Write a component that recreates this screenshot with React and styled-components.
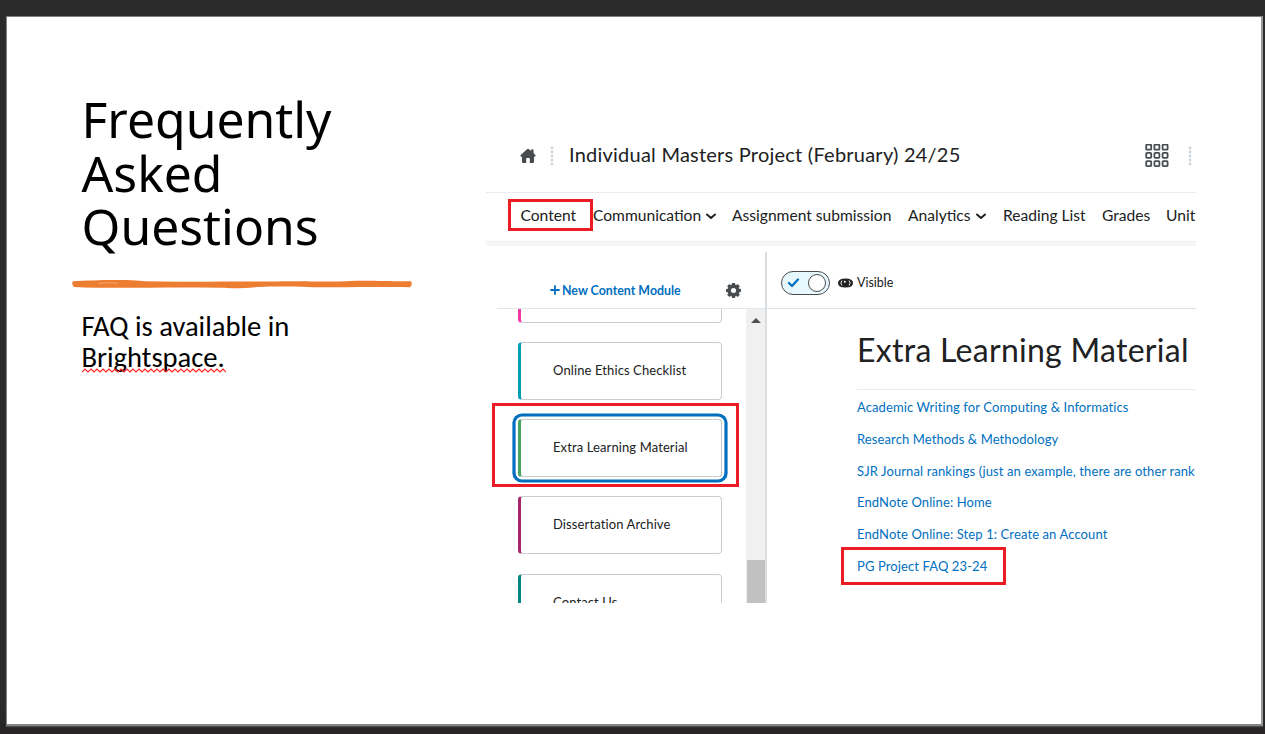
import React from "react";
import styled, { createGlobalStyle } from "styled-components";

const GlobalStyle = createGlobalStyle`
  * { box-sizing: border-box; }
  body { margin: 0; background: #2b2b2b; overflow: hidden; }
  h1, h2, p { margin: 0; font-weight: 400; }
`;

const Stage = styled.main`
  width: 1265px;
  height: 734px;
  padding: 16px 2px 8px 6px;
  background: linear-gradient(#2b2b2b 700px, #262424);
  font-family: Lato, sans-serif;
  overflow: hidden;
`;

const Slide = styled.section`
  display: flex;
  height: 710px;
  background: #fff;
  border: 1px solid #7f7f7f;
  border-right: 2px solid #999;
  border-bottom: 2px solid #858585;
  box-shadow: 0 1px 1px 0 #4c4c4c;
`;

const Intro = styled.div`
  width: 479px;
  padding: 76px 0 0 64.5px;
  flex: none;
`;

const Title = styled.h1`
  padding-left: 10px;
  font: 400 49.8px/53.6px "Noto Sans", sans-serif;
  color: #000;
`;

const Stroke = styled.svg`
  display: block;
  width: 340px;
  height: 12px;
  margin-top: 24px;
`;

const Summary = styled.p`
  margin-top: 21px;
  padding-left: 10px;
  font: 400 28.6px/31px Carlito, Lato, sans-serif;
  color: #000;
`;

const Misspelled = styled.span`
  display: inline-block;
  position: relative;
`;

const Squiggle = styled.svg`
  position: absolute;
  left: 0;
  bottom: 0;
  width: 144px;
  height: 5px;
`;

const Screen = styled.div`
  display: flex;
  flex-direction: column;
  width: 710px;
  height: 486px;
  margin-top: 100px;
  overflow: hidden;
  color: #202122;
  white-space: nowrap;
`;

const CourseBar = styled.header`
  display: flex;
  align-items: center;
  height: 76px;
  padding: 2px 4px 0 34px;
  border-bottom: 1px solid #e9ebed;
  flex: none;
`;

const Dots = styled.svg`
  width: 4px;
  height: 20px;
  margin-left: ${(p) => p.$gap}px;
  fill: #cdd5dc;
`;

const CourseName = styled.div`
  width: 591px;
  flex: none;
  padding: 0 0 4px 15px;
  font-size: 20px;
  line-height: 26px;
  letter-spacing: 0.23px;
`;

const NavBar = styled.nav`
  display: flex;
  height: 53px;
  padding: 6px 0 0 22px;
  border-bottom: 4px solid #f7f7f8;
  box-shadow: inset 0 -1px #ebedef;
  flex: none;
  font-size: 15.6px;
`;

const NavItem = styled.div`
  display: flex;
  flex: none;
  width: ${(p) => p.$w}px;
  height: 32px;
  align-items: center;
  padding-left: ${(p) => p.$pad || 0}px;
  border: ${(p) => (p.$marked ? 3 : 0)}px solid #ed1c24;
  gap: 4px;
`;

const Columns = styled.div`
  display: flex;
  height: 351px;
  margin-top: 6px;
  flex: none;
`;

const Sidebar = styled.aside`
  width: 279px;
  flex: none;
`;

const SidebarHead = styled.div`
  display: flex;
  align-items: center;
  height: 57px;
  margin-left: 11px;
  padding: 20px 0 0 53px;
  border-bottom: 1px solid #e3e5e8;
  color: #006fbf;
  font-size: 12.4px;
  font-weight: 700;
`;

const NewModule = styled.span`
  width: 163.5px;
  margin-left: 2px;
`;

const SidebarBody = styled.div`
  display: flex;
  height: 294px;
  overflow: hidden;
`;

const ModuleList = styled.div`
  width: 260px;
  padding-left: 7px;
  flex: none;
`;

const Slot = styled.div`
  width: 246px;
  height: ${(p) => (p.$marked ? 84 : 58)}px;
  margin: ${(p) => p.$lift || 0}px 0 ${(p) => p.$next}px ${(p) => (p.$marked ? -1 : 0)}px;
  padding-left: ${(p) => (p.$marked ? 23 : 25)}px;
  padding-top: ${(p) => (p.$marked ? 13 : 0)}px;
  border: ${(p) => (p.$marked ? 3 : 0)}px solid #ed1c24;
  ${(p) => p.$marked && "width: 247px;"}
`;

const Module = styled.div`
  display: flex;
  align-items: center;
  width: 204px;
  height: 58px;
  padding: 0 0 2px 32px;
  border: 1px solid #c9cdd1;
  border-left: 3px solid ${(p) => p.$tone};
  border-radius: 4px;
  box-shadow: ${(p) => (p.$focus ? "0 0 0 2.4px #fff, 0 0 0 5.6px #006fbf" : "none")};
  font-size: 13px;
  letter-spacing: 0.11px;
`;

const ScrollTrack = styled.div`
  display: flex;
  flex-direction: column;
  justify-content: space-between;
  align-items: center;
  width: 19px;
  padding-top: 8px;
  background: #f0f0f0;
`;

const Thumb = styled.div`
  width: 18px;
  height: 43px;
  background: #c1c1c1;
`;

const Pane = styled.section`
  width: 431px;
  border-left: 2px solid #d8dde2;
`;

const Visibility = styled.div`
  display: flex;
  align-items: center;
  height: 57px;
  padding: 5px 0 0 14px;
  border-bottom: 1px solid #dcdfe2;
  font-size: 12.5px;
`;

const VisibleLabel = styled.span`
  padding-bottom: 1px;
`;

const Toggle = styled.div`
  display: flex;
  align-items: center;
  justify-content: space-between;
  width: 49px;
  height: 24px;
  padding: 0 3px 0 5px;
  border: 1px solid #494c4e;
  border-radius: 12px;
  background: #e8f8ff;
`;

const Knob = styled.span`
  width: 18px;
  height: 18px;
  border: 1px solid #494c4e;
  border-radius: 50%;
  background: #fff;
`;

const Eye = styled.svg`
  width: 15px;
  height: 10px;
  margin: 0 4px 0 8px;
`;

const Topic = styled.div`
  padding-left: 90px;
`;

const TopicTitle = styled.h2`
  height: 81px;
  padding-top: 20px;
  border-bottom: 1px solid #e9ebed;
  font-size: 32px;
  line-height: 42px;
  letter-spacing: 0.28px;
`;

const Links = styled.div`
  padding-top: 1px;
  font-size: 13px;
  line-height: 32px;
  color: #006fbf;
  letter-spacing: 0.11px;
`;

const TopicLink = styled.div`
  height: 31.8px;
`;

const MarkedLink = styled(TopicLink)`
  width: 165px;
  height: 38px;
  margin: -3px 0 0 -16px;
  padding-left: 13px;
  border: 3px solid #ed1c24;
`;

function DotColumn({ gap }) {
  return (
    <Dots $gap={gap} viewBox="0 0 4 20">
      {[2, 6, 10, 14, 18].map((y) => <circle key={y} cx="2" cy={y} r="1.4" />)}
    </Dots>
  );
}

function Chevron() {
  return (
    <svg width="12" height="10" viewBox="0 0 12 10" fill="none" stroke="#202122" strokeWidth="2" strokeLinecap="round" strokeLinejoin="round">
      <path d="M2 4.500 6 8l4-3.500" />
    </svg>
  );
}

function Gear() {
  return (
    <svg width="15" height="15" viewBox="0 0 16 16">
      <g fill="#494c4e">
        {[0, 45, 90, 135].map((a) => <rect key={a} x="6.1" y="0" width="3.8" height="16" rx="1" transform={`rotate(${a} 8 8)`} />)}
        <circle cx="8" cy="8" r="6.3" />
      </g>
      <circle cx="8" cy="8" r="2.7" fill="#fff" />
    </svg>
  );
}

const nav = [
  { label: "Content", w: 85, pad: 9.5, marked: true },
  { label: "Communication", w: 139, menu: true },
  { label: "Assignment submission", w: 176 },
  { label: "Analytics", w: 95, menu: true },
  { label: "Reading List", w: 99 },
  { label: "Grades", w: 64 },
  { label: "Unit", w: 40 },
];

const links = [
  "Academic Writing for Computing & Informatics",
  "Research Methods & Methodology",
  "SJR Journal rankings (just an example, there are other rank",
  "EndNote Online: Home",
  "EndNote Online: Step 1: Create an Account",
];

export default function App() {
  return (
    <>
      <GlobalStyle />
      <Stage>
        <Slide>
          <Intro>
            <Title>Frequently<br />Asked<br />Questions</Title>
            <Stroke viewBox="0 0 340 12">
              <path fill="#ed7d31" d="M1 3.3C22 2 55 1 74 3.3c35 1 73-.3 122 .3 45-1.2 55 .8 77-.4 25-1.2 40 .3 66 0q2 3-1 6c-29-.3-47-.2-73 .1-24 .2-38-1.3-68-.8-23 1-29 2.5-48 1.3C94 8.5 47 11 2 9Q-1 6 1 3.3Z" />
              <path d="M27 5.3q9-1.3 19 0" fill="none" stroke="#f6b184" strokeWidth=".8" />
            </Stroke>
            <Summary>
              FAQ is available in<br />
              <Misspelled>
                Brightspace.
                <Squiggle viewBox="0 0 144 5">
                  <path fill="none" stroke="#ff2020" strokeWidth="1.100" d={"M0 4" + Array.from({ length: 24 }, () => "l3-3 3 3").join("")} />
                </Squiggle>
              </Misspelled>
            </Summary>
          </Intro>
          <Screen>
            <CourseBar>
              <svg width="16" height="16" viewBox="0 0 16 16" fill="#494c4e">
                <path d="M7 1.2q1-.8 2 0l2 1.7V1.5h2.5v3.6L15.3 7q.9 1.3-.6 1.7H14V14q0 1-1 1H9.8v-4.2q0-.8-.8-.8H7q-.8 0-.8.8V15H3q-1 0-1-1V8.700H1.300Q-.2 8.300.7 7Z" />
              </svg>
              <DotColumn gap={14} />
              <CourseName>Individual Masters Project (February) 24/25</CourseName>
              <svg width="24" height="24" viewBox="0 0 24 24" fill="none" stroke="#494c4e" strokeWidth="1.8">
                {[0, 8.2, 16.4].map((y) => [0, 8.2, 16.4].map((x) => <rect key={`${x}-${y}`} x={x + 1.2} y={y + 0.7} width="5" height="5" rx=".8" />))}
              </svg>
              <DotColumn gap={19} />
            </CourseBar>
            <NavBar>
              {nav.map((n) => (
                <NavItem key={n.label} $w={n.w} $pad={n.pad} $marked={n.marked}>
                  <span>{n.label}</span>{n.menu && <Chevron />}
                </NavItem>
              ))}
            </NavBar>
            <Columns>
              <Sidebar>
                <SidebarHead>
                  <svg width="10" height="10" viewBox="0 0 10 10" stroke="#006fbf" strokeWidth="1.8" strokeLinecap="round"><path d="M5 1v8M1 5h8" /></svg>
                  <NewModule>New Content Module</NewModule>
                  <Gear />
                </SidebarHead>
                <SidebarBody>
                  <ModuleList>
                    <Slot $lift={-44} $next={19}><Module $tone="#f53aa5" /></Slot>
                    <Slot $next={3.4}><Module $tone="#009fb5">Online Ethics Checklist</Module></Slot>
                    <Slot $marked $next={9}><Module $focus $tone="#46a661">Extra Learning Material</Module></Slot>
                    <Slot $next={19.6}><Module $tone="#a6256f">Dissertation Archive</Module></Slot>
                    <Slot $next={0}><Module $tone="#008580">Contact Us</Module></Slot>
                  </ModuleList>
                  <ScrollTrack>
                    <svg width="10" height="6" viewBox="0 0 10 6"><path d="M0 6 5 1l5 5Z" fill="#505050" /></svg>
                    <Thumb />
                  </ScrollTrack>
                </SidebarBody>
              </Sidebar>
              <Pane>
                <Visibility>
                  <Toggle>
                    <svg width="13" height="11" viewBox="0 0 13 11" fill="none" stroke="#006fbf" strokeWidth="2.3" strokeLinecap="round" strokeLinejoin="round"><path d="m2 6 3 3 6-6.500" /></svg>
                    <Knob />
                  </Toggle>
                  <Eye viewBox="0 0 15 10">
                    <path d="M0 5Q0 .5 7.500.500T15 5q0 4.500-7.500 4.500T0 5Z" fill="#202122" />
                    <path d="M4 2.500Q1.600 5 4 7.500M11 2.500Q13.400 5 11 7.500" fill="none" stroke="#fff" strokeWidth=".9" />
                    <circle cx="6.800" cy="3.800" r="1" fill="#fff" />
                  </Eye>
                  <VisibleLabel>Visible</VisibleLabel>
                </Visibility>
                <Topic>
                  <TopicTitle>Extra Learning Material</TopicTitle>
                  <Links>
                    {links.map((t) => <TopicLink key={t}>{t}</TopicLink>)}
                    <MarkedLink>PG Project FAQ 23-24</MarkedLink>
                  </Links>
                </Topic>
              </Pane>
            </Columns>
          </Screen>
        </Slide>
      </Stage>
    </>
  );
}
